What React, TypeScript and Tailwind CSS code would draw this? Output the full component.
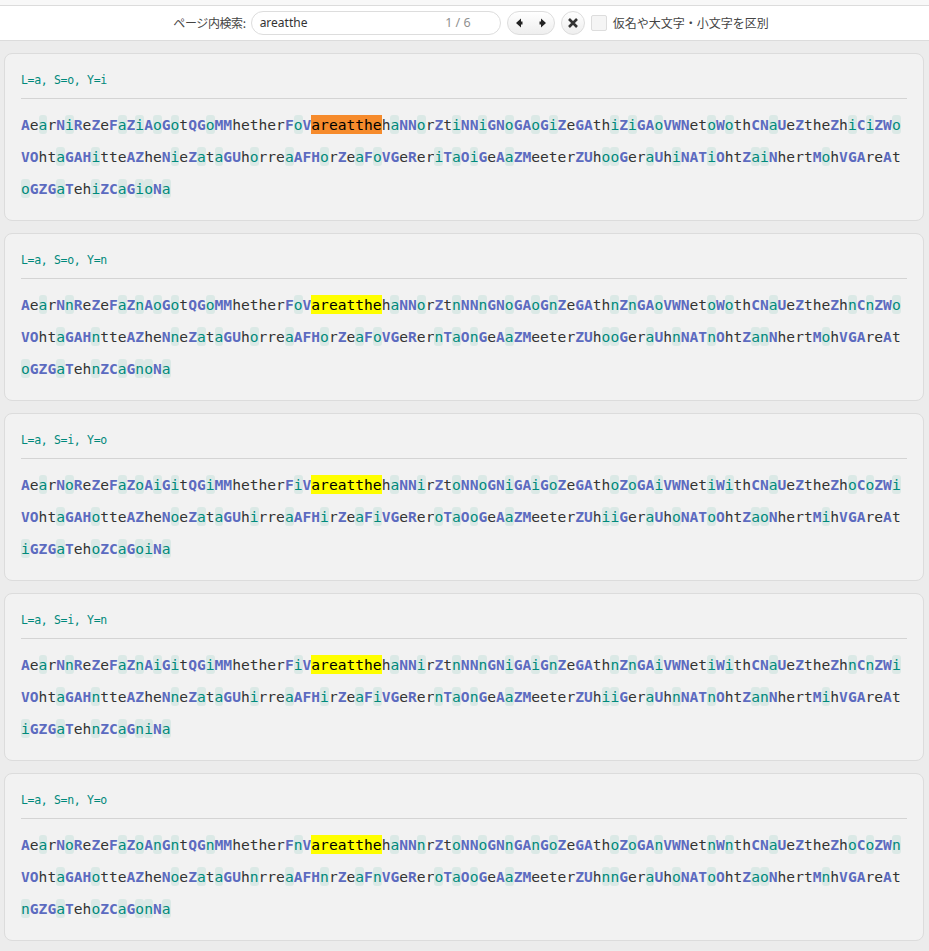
import React from "react"

const LINES = [
  "AearNyReZeFaZyAsGstQGsMMhetherFsVareatthehaNNsrZtyNNyGNsGAsGyZeGAthyZyGAsVWNetsWsthCNaUeZtheZhyCyZWs",
  "VOhtaGAHytteAZheNyeZataGUhsrreaAFHsrZeaFsVGeReryTaOyGeAaZMeeterZUhssGeraUhyNATyOhtZayNhertMshVGAreAt",
  "sGZGaTehyZCaGysNa",
]

const VARIANTS = [
  { s: "o", y: "i" },
  { s: "o", y: "n" },
  { s: "i", y: "o" },
  { s: "i", y: "n" },
  { s: "n", y: "o" },
]

const MATCH = "areatthe"

function Glyph({ ch, slots }: { ch: string; slots: string }) {
  if (/[A-Z]/.test(ch)) return <span className="font-bold text-[#5c6bc0]">{ch}</span>
  if (slots.includes(ch)) {
    return (
      <span className="inline-block h-[19px] rounded-[3px] bg-[#dbe9e6] leading-[19px] text-[#00897b]">
        {ch}
      </span>
    )
  }
  return <span>{ch}</span>
}

function Line({ text, s, y, active }: { text: string; s: string; y: string; active: boolean }) {
  const filled = text.replace(/s/g, s).replace(/y/g, y)
  const at = text.indexOf(MATCH)
  const slots = `a${s}${y}`
  const chars = (part: string) =>
    part.split("").map((ch, i) => <Glyph key={i} ch={ch} slots={slots} />)

  return (
    <div className="h-8 whitespace-pre leading-8">
      {at < 0 ? (
        chars(filled)
      ) : (
        <>
          {chars(filled.slice(0, at))}
          <span
            className={`inline-block h-[19px] leading-[19px] text-black ${
              active ? "bg-[#f68b2c]" : "bg-[#ffff00]"
            }`}
          >
            {MATCH}
          </span>
          {chars(filled.slice(at + MATCH.length))}
        </>
      )}
    </div>
  )
}

function Card({ s, y, active }: { s: string; y: string; active: boolean }) {
  return (
    <div className="rounded-lg border border-[#dcdcdc] bg-[#f2f2f2] px-4 pb-[15px] pt-[17px] font-['DejaVu_Sans_Mono',monospace]">
      <div className="h-[28px] border-b border-[#d4d4d4] text-[11.5px] leading-[18px] tracking-[-0.32px] text-[#00897b]">
        L=a, S={s}, Y={y}
      </div>
      <div className="mt-[10px] text-[14.61px] text-[#333]">
        {LINES.map((text) => (
          <Line key={text} text={text} s={s} y={y} active={active} />
        ))}
      </div>
    </div>
  )
}

function FindBar() {
  return (
    <div className="flex h-[35px] items-center justify-center gap-1.5 border-b border-[#dcdcdc] bg-white pl-[13px] font-['Noto_Sans_CJK_JP',sans-serif] text-xs text-[#444]">
      <span className="-mr-px whitespace-nowrap tracking-[-0.4px]">ページ内検索:</span>
      <div className="flex h-6 w-[250px] items-center justify-between rounded-full border border-[#ddd] bg-white pl-2 pr-[29px] font-['Noto_Sans',sans-serif]">
        <span className="text-[#333]">areatthe</span>
        <span className="text-[12.5px] text-[#909090]">1 / 6</span>
      </div>
      <div className="flex h-6 w-12 items-center justify-center gap-4 rounded-full border border-[#ddd] bg-gradient-to-b from-white to-[#eee]">
        <svg width="7" height="10" viewBox="0 0 7 10" className="fill-[#222]"><path d="M0 5 5 .5V3.5H6.5V6.5H5V9.5z" /></svg>
        <svg width="7" height="10" viewBox="0 0 7 10" className="fill-[#222]"><path d="M7 5 2 .5V3.5H.5V6.5H2V9.5z" /></svg>
      </div>
      <div className="flex size-6 items-center justify-center rounded-full border border-[#ddd] bg-gradient-to-b from-white to-[#eee]">
        <svg width="10" height="10" viewBox="0 0 10 10" className="stroke-[#333]" strokeWidth="2.6"><path d="M1 1 9 9M9 1 1 9" /></svg>
      </div>
      <div className="size-4 rounded-[2px] border border-[#ddd] bg-[#f5f5f5]" />
      <span className="whitespace-nowrap">仮名や大文字・小文字を区別</span>
    </div>
  )
}

export default function App() {
  return (
    <div className="min-h-[951px] bg-[#ececec]">
      <div className="h-[6px] border-b border-[#dcdcdc] bg-[#f8f8f8]" />
      <FindBar />
      <div className="flex flex-col gap-3 pb-[10px] pl-1 pr-[5px] pt-3">
        {VARIANTS.map((v, i) => (
          <Card key={i} s={v.s} y={v.y} active={i === 0} />
        ))}
      </div>
    </div>
  )
}
